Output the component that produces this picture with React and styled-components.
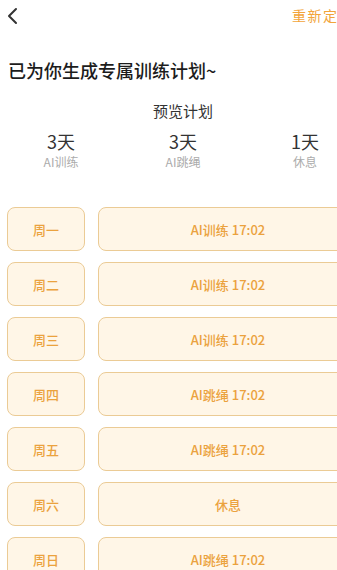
import React from 'react';
import styled, { createGlobalStyle } from 'styled-components';

const GlobalStyle = createGlobalStyle`
  html, body {
    margin: 0;
    padding: 0;
    background: #ffffff;
    overflow: hidden;
  }
  body {
    font-family: "Noto Sans CJK SC", "Noto Sans", sans-serif;
  }
`;

// Page is laid out a bit wider than the window, like the cropped original
const Page = styled.div`
  width: 366px;
  height: 570px;
  overflow: hidden;
`;

const TopBar = styled.div`
  height: 32px;
  display: flex;
  align-items: center;
  justify-content: space-between;
  padding: 0 12px 0 6px;
`;

const BackButton = styled.button`
  border: none;
  background: none;
  padding: 0;
  width: 14px;
  height: 20px;
  display: flex;
  align-items: center;
  cursor: pointer;
`;

const ResetLink = styled.span`
  font-size: 14px;
  color: #f2a43a;
  letter-spacing: 1.5px;
  margin-top: -2px;
`;

const Title = styled.h1`
  margin: 26px 0 0 8px;
  font-size: 18px;
  line-height: 24px;
  font-weight: 500;
  color: #1c1c1c;
`;

const PreviewTitle = styled.div`
  margin-top: 19px;
  text-align: center;
  font-size: 15px;
  line-height: 20px;
  color: #333;
`;

const Stats = styled.div`
  display: grid;
  grid-template-columns: repeat(3, 1fr);
  margin-top: 9px;
`;

const Stat = styled.div`
  display: flex;
  flex-direction: column;
  align-items: center;
  gap: 3px;
`;

const StatValue = styled.div`
  font-size: 18px;
  line-height: 22px;
  color: #333;
`;

const StatLabel = styled.div`
  font-size: 12px;
  line-height: 14px;
  color: #ababab;
`;

const Schedule = styled.div`
  margin-top: 38px;
  padding: 0 8px 0 7px;
  display: flex;
  flex-direction: column;
  gap: 11px;
`;

const Row = styled.div`
  display: flex;
  gap: 13px;
  height: 44px;
`;

const Cell = styled.div`
  flex: ${p => (p.$grow ? 1 : '0 0 78px')};
  box-sizing: border-box;
  border: 1px solid #ebcb95;
  border-radius: 8px;
  background: #fff6e7;
  display: flex;
  align-items: center;
  justify-content: center;
  font-size: 13px;
  color: #eba23e;
  font-weight: 500;
`;

const stats = [
  { value: '3天', label: 'AI训练' },
  { value: '3天', label: 'AI跳绳' },
  { value: '1天', label: '休息' },
];

const plan = [
  { day: '周一', item: 'AI训练 17:02' },
  { day: '周二', item: 'AI训练 17:02' },
  { day: '周三', item: 'AI训练 17:02' },
  { day: '周四', item: 'AI跳绳 17:02' },
  { day: '周五', item: 'AI跳绳 17:02' },
  { day: '周六', item: '休息' },
  { day: '周日', item: 'AI跳绳 17:02' },
];

export default function App() {
  return (
    <Page>
      <GlobalStyle />
      <TopBar>
        <BackButton aria-label="back">
          <svg width="12" height="18" viewBox="0 0 12 18">
            <path d="M10 2 L3 9 L10 16" fill="none" stroke="#333" strokeWidth="2" strokeLinecap="round" strokeLinejoin="round" />
          </svg>
        </BackButton>
        <ResetLink>重新定制</ResetLink>
      </TopBar>
      <Title>已为你生成专属训练计划~</Title>
      <PreviewTitle>预览计划</PreviewTitle>
      <Stats>
        {stats.map((s, i) => (
          <Stat key={i}>
            <StatValue>{s.value}</StatValue>
            <StatLabel>{s.label}</StatLabel>
          </Stat>
        ))}
      </Stats>
      <Schedule>
        {plan.map(p => (
          <Row key={p.day}>
            <Cell>{p.day}</Cell>
            <Cell $grow>{p.item}</Cell>
          </Row>
        ))}
      </Schedule>
    </Page>
  );
}
